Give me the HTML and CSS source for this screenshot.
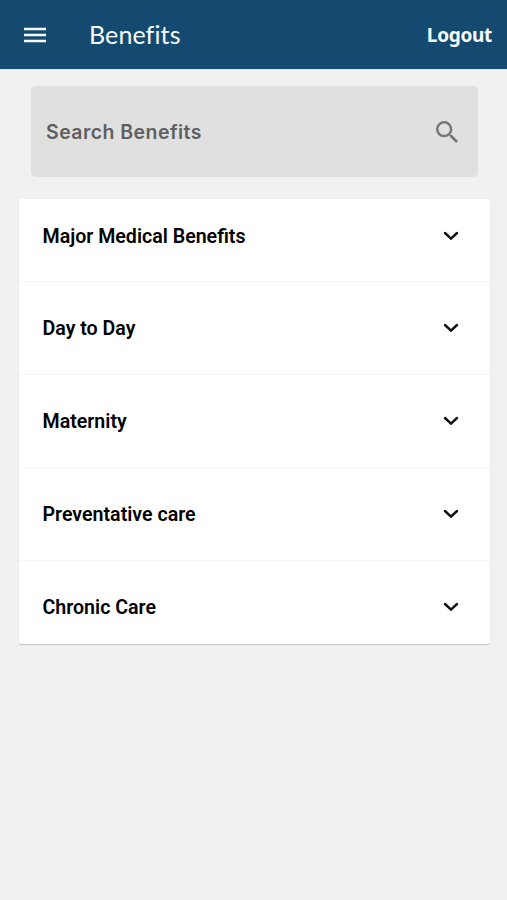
FILE: index.html
```html
<!DOCTYPE html>
<html lang="en">
<head>
<meta charset="utf-8">
<title>Benefits</title>
<link rel="stylesheet" href="styles.css">
</head>
<body>
<header class="bar">
  <svg class="menu" viewBox="0 0 24 16"><path d="M1 2h22M1 8h22M1 14h22"/></svg>
  <h1 class="title">Benefits</h1>
  <a class="logout">Logout</a>
</header>
<main>
  <div class="search">
    <span class="placeholder">Search Benefits</span>
    <svg class="glass" viewBox="3 3 17.5 17.5"><path d="M15.5 14h-.79l-.28-.27A6.471 6.471 0 0 0 16 9.5 6.5 6.5 0 1 0 9.5 16c1.61 0 3.09-.59 4.23-1.57l.27.28v.79l5 4.99L20.49 19l-4.99-5zm-6 0C7.01 14 5 11.99 5 9.5S7.01 5 9.5 5 14 7.01 14 9.5 11.99 14 9.5 14z"/></svg>
  </div>
  <ul class="list">
    <li class="row"><span>Major Medical Benefits</span><svg class="chev" viewBox="0 0 16 10"><path d="M2 2l6 5.6L14 2"/></svg></li>
    <li class="row"><span>Day to Day</span><svg class="chev" viewBox="0 0 16 10"><path d="M2 2l6 5.6L14 2"/></svg></li>
    <li class="row"><span>Maternity</span><svg class="chev" viewBox="0 0 16 10"><path d="M2 2l6 5.6L14 2"/></svg></li>
    <li class="row"><span>Preventative care</span><svg class="chev" viewBox="0 0 16 10"><path d="M2 2l6 5.6L14 2"/></svg></li>
    <li class="row"><span>Chronic Care</span><svg class="chev" viewBox="0 0 16 10"><path d="M2 2l6 5.6L14 2"/></svg></li>
  </ul>
</main>
</body>
</html>
```
FILE: styles.css
```css
* { box-sizing: border-box; }
body { margin: 0; min-height: 900px; background: #f1f1f1; font-family: Roboto, sans-serif; }
.bar { height: 69px; background: #144a70; color: #f8fcff; display: flex; align-items: center; padding: 0 15px 0 23px; box-shadow: 0 1px 0 #dce6ec; }
.menu { width: 24px; height: 16px; fill: none; stroke: #f4faff; stroke-width: 2.4; }
.title { margin: 0 0 0 42px; padding-bottom: 1px; flex: 1; font: 400 25px/30px Lato, sans-serif; letter-spacing: .1px; }
.logout { font: 700 19px/24px "Noto Sans", sans-serif; letter-spacing: -.3px; padding-top: 1px; }
main { padding: 17px 17.5px 0 18.5px; }
.search { margin: 0 12px; height: 91px; background: #e0e0e0; border-radius: 5px; display: flex; align-items: center; justify-content: space-between; padding: 0 19.5px 0 15.5px; }
.placeholder { font: 600 19.5px/24px Inter, sans-serif; letter-spacing: .45px; color: #5f5f5f; padding-top: 1px; }
.glass { width: 22px; height: 22px; fill: #757575; }
.list { list-style: none; margin: 22px 0 0; padding: 0; background: #fff; border-radius: 2px; box-shadow: 0 1px 1px rgba(0,0,0,.2); }
.row { height: 93px; border-bottom: 1px solid #f5f5f5; display: flex; align-items: center; justify-content: space-between; padding: 0 31px 0 24px; font-size: 19.6px; line-height: 24px; font-weight: 600; color: #000; }
.row span { padding-top: 2px; }
.row:first-child { height: 83px; padding-bottom: 9px; }
.row:last-child { height: 83px; border: 0; padding-top: 9px; }
.chev { width: 16px; height: 10px; fill: none; stroke: #111; stroke-width: 2.5; stroke-linecap: round; }
```
